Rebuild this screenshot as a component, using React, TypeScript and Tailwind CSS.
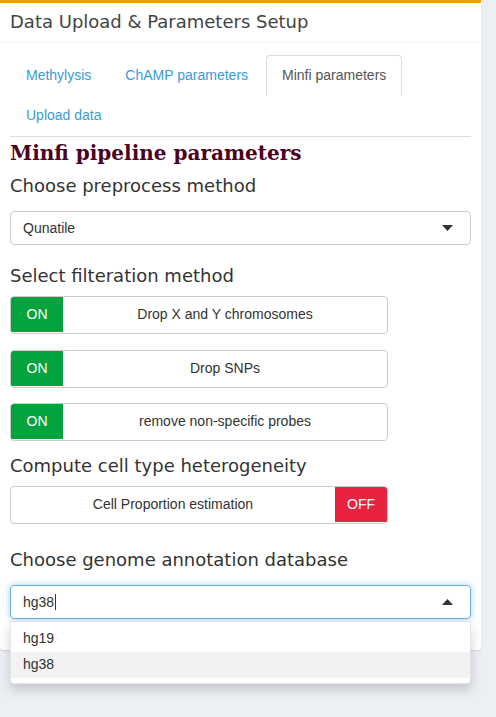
import React from 'react'

const sans = { fontFamily: '"Liberation Sans", Arial, sans-serif' }
const label = 'text-[18px] leading-[24px] text-[#333]'

function Caret({ up }: { up?: boolean }) {
  return (
    <svg width="11" height="6" viewBox="0 0 11 6" className="text-[#333]">
      {up ? <path d="M0 6 L5.5 0 L11 6 Z" fill="currentColor" /> : <path d="M0 0 L11 0 L5.5 6 Z" fill="currentColor" />}
    </svg>
  )
}

function Switch({ text, on }: { text: string; on: boolean }) {
  return (
    <div className="flex h-[38px] w-[378px] overflow-hidden rounded-[4px] border border-[#ccc] bg-white pb-px text-[14px] text-[#333]" style={sans}>
      {on && <div className="flex w-[52px] items-center justify-center bg-[#03a33d] text-white">ON</div>}
      <div className="flex flex-1 items-center justify-center">{text}</div>
      {!on && <div className="flex w-[52px] items-center justify-center bg-[#e9223f] text-white">OFF</div>}
    </div>
  )
}

export default function App() {
  const tabs = ['Methylysis', 'ChAMP parameters', 'Minfi parameters']
  return (
    <div className="min-h-[717px] bg-[#ecf0f5]" style={{ fontFamily: '"DejaVu Sans", sans-serif' }}>
      <div className="w-[481px] rounded-b-[3px] border-t-[3px] border-[#f39c12] bg-white shadow-[0_1px_1px_rgba(0,0,0,0.1)]">
        <div className="flex h-[40px] items-center border-b border-[#f4f4f4] px-[10px] pb-[3px] text-[18px] text-[#444]">
          Data Upload &amp; Parameters Setup
        </div>
        <div className="px-[10px] pt-[12px] pb-[31px]">
          <div className="flex flex-wrap border-b border-[#ddd] text-[14px]" style={sans}>
            {tabs.map((t) => (
              <div
                key={t}
                className={
                  t === 'Minfi parameters'
                    ? 'mr-[2px] flex h-[41px] items-center rounded-t-[4px] border border-b-0 border-[#ddd] px-[15px] pb-px text-[#555]'
                    : 'mr-[2px] flex h-[41px] items-center border border-transparent px-[15px] pb-px text-[#3a9ad9]'
                }
              >
                {t}
              </div>
            ))}
            <div className="flex h-[40px] items-center border border-transparent px-[15px] pb-px text-[#3a9ad9]">Upload data</div>
          </div>

          <h1 className="mt-[3px] text-[20px] font-bold leading-[26px] text-[#4d0020]" style={{ fontFamily: '"DejaVu Serif", serif' }}>
            Minfi pipeline parameters
          </h1>
          <div className={`mt-[8px] ${label}`}>Choose preprocess method</div>
          <div className="mt-[13px] flex h-[34px] items-center justify-between rounded-[4px] border border-[#ccc] pl-[12px] pr-[17px] text-[14px] text-[#333]" style={sans}>
            <span>Qunatile</span>
            <Caret />
          </div>

          <div className={`mt-[19px] ${label}`}>Select filteration method</div>
          <div className="mt-[8px] flex flex-col">
            <Switch text="Drop X and Y chromosomes" on />
            <div className="mt-[16px]">
              <Switch text="Drop SNPs" on />
            </div>
            <div className="mt-[15px]">
              <Switch text="remove non-specific probes" on />
            </div>
          </div>

          <div className={`mt-[13px] ${label}`}>Compute cell type heterogeneity</div>
          <div className="mt-[8px]">
            <Switch text="Cell Proportion estimation" on={false} />
          </div>

          <div className={`mt-[24px] ${label}`}>Choose genome annotation database</div>
          <div className="relative mt-[13px]" style={sans}>
            <div className="flex h-[34px] items-center justify-between rounded-[4px] border border-[#66afe9] pl-[12px] pr-[17px] text-[14px] text-[#333] shadow-[0_0_6px_rgba(102,175,233,0.6)]">
              <span className="flex items-center">
                hg38<span className="ml-[1px] inline-block h-[16px] w-px bg-[#333]" />
              </span>
              <Caret up />
            </div>
            <div className="absolute top-[36px] right-0 left-0 z-10 rounded-b-[4px] border border-[#e5e5e5] bg-white pt-[4px] pb-[5px] text-[14px] text-[#333] shadow-[0_6px_12px_rgba(0,0,0,0.175)]">
              <div className="flex h-[26px] items-center px-[12px] pb-[2px]">hg19</div>
              <div className="flex h-[26px] items-center bg-[#f2f2f2] px-[12px] pb-[2px]">hg38</div>
            </div>
          </div>
        </div>
      </div>
    </div>
  )
}
